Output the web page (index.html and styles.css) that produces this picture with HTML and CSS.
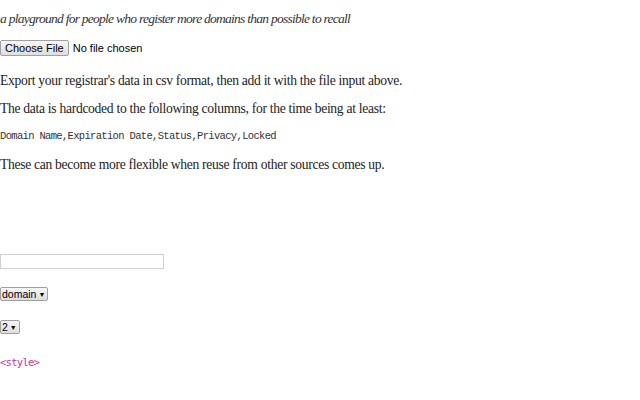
FILE: index.html
```html
<!DOCTYPE html>
<html>
<head>
<meta charset="utf-8">
<link rel="stylesheet" href="styles.css">
</head>
<body>
<p class="tagline">a playground for people who register more domains than possible to recall</p>
<div class="file-row"><span class="btn">Choose File</span><span class="file-label">No file chosen</span></div>
<p class="text first">Export your registrar's data in csv format, then add it with the file input above.</p>
<p class="text">The data is hardcoded to the following columns, for the time being at least:</p>
<p class="mono">Domain Name,Expiration Date,Status,Privacy,Locked</p>
<p class="text">These can become more flexible when reuse from other sources comes up.</p>
<div class="search"></div>
<div class="select sel1">domain <span class="arrow">▼</span></div>
<div class="select sel2">2 <span class="arrow">▼</span></div>
<p class="style-tag">&lt;style&gt;</p>
</body>
</html>
```
FILE: styles.css
```css
html, body { margin: 0; padding: 0; background: #fff; }
body { font-family: "Liberation Serif", serif; color: #222; }
p { margin: 0; }
.tagline { font-style: italic; font-size: 13.5px; letter-spacing: -0.74px; padding-top: 10px; height: 30px; line-height: 17px; color: #333; }
.file-row { display: flex; align-items: center; height: 16px; font-family: "Liberation Sans", Arial, sans-serif; font-size: 11px; }
.btn { border: 1px solid #a0a0a0; border-radius: 2px; background: linear-gradient(#f6f6f6, #dedede); padding: 0 4px; height: 14px; line-height: 14px; color: #000; }
.file-label { margin-left: 4px; color: #000; }
.text { font-size: 13.6px; letter-spacing: -0.3px; line-height: 18px; }
.first { margin-top: 16px; }
.text + .text { margin-top: 10px; }
.mono { font-family: "Liberation Mono", monospace; font-size: 10.5px; letter-spacing: -0.67px; margin-top: 12px; line-height: 12px; color: #333; }
.mono + .text { margin-top: 14px; }
.search { width: 162px; height: 13px; border: 1px solid #d0d0d0; margin-top: 80px; }
.select { display: flex; width: max-content; align-items: center; border: 1px solid #a0a0a0; border-radius: 2px; background: linear-gradient(#f6f6f6, #dedede); font-family: "Liberation Sans", Arial, sans-serif; font-size: 10.5px; height: 12px; padding: 0 2px 0 1px; color: #000; }
.arrow { font-size: 7px; margin-left: 2px; }
.sel1 { margin-top: 18px; }
.sel2 { margin-top: 19px; }
.style-tag { font-family: "DejaVu Sans Mono", monospace; font-size: 10.5px; letter-spacing: -0.72px; color: #c0399a; margin-top: 22px; }
```
